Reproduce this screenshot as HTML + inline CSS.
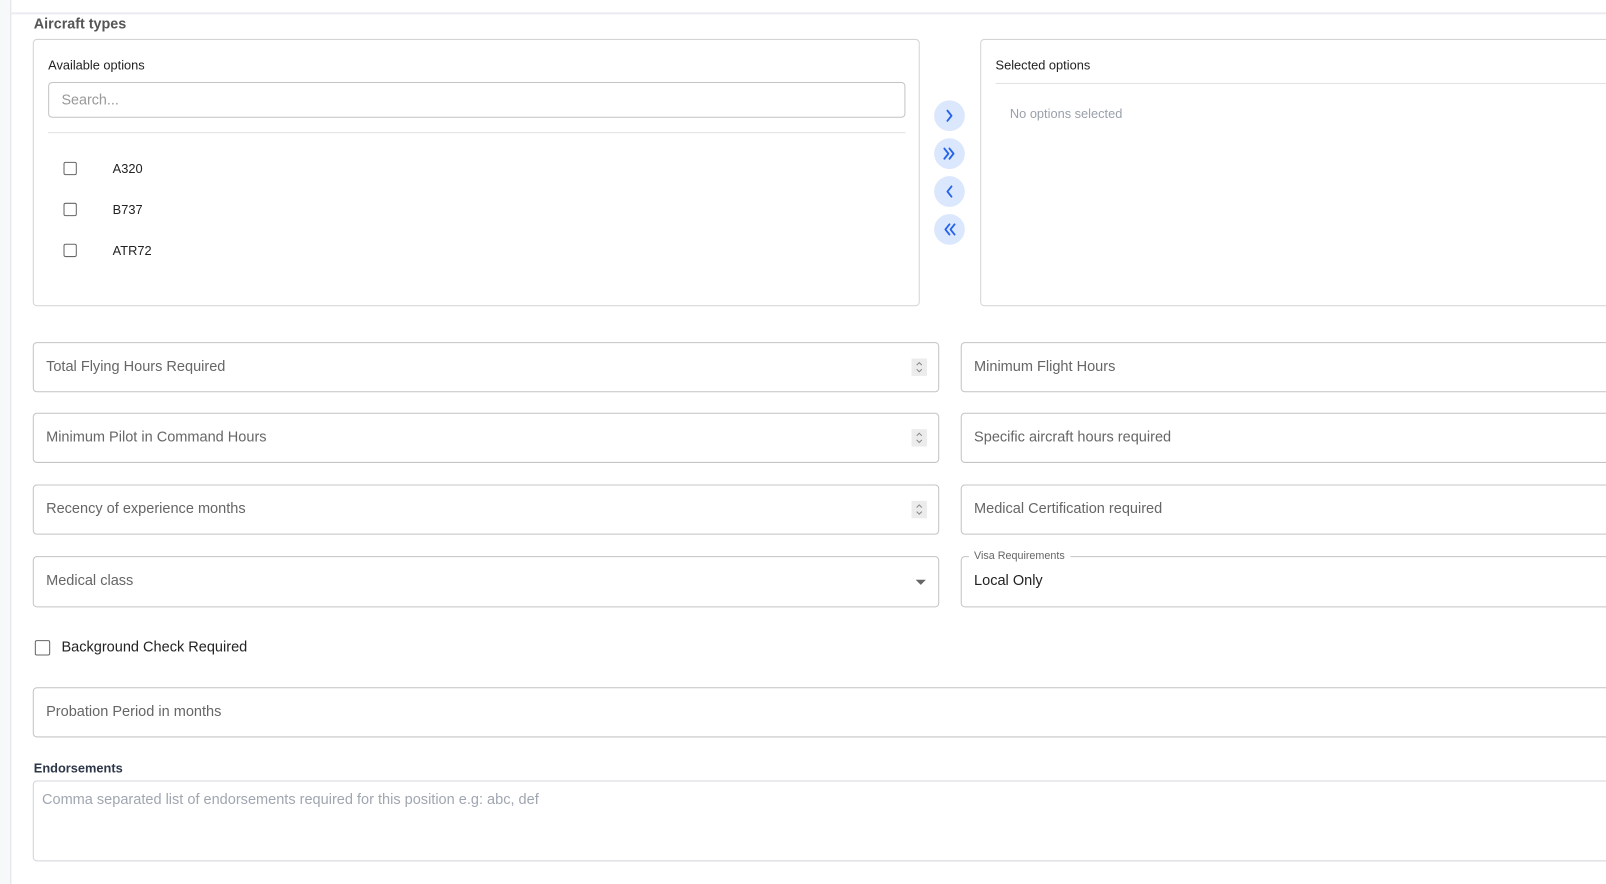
<!DOCTYPE html>
<html><head><meta charset="utf-8"><style>
*{box-sizing:border-box;margin:0;padding:0}
body{width:1606px;height:863px;overflow:hidden;background:#fff;font-family:"Liberation Sans",sans-serif;position:relative}
#w{position:absolute;left:0;top:0;width:1568px;height:843px;transform:scale(1.02423);transform-origin:0 0}
.a{position:absolute}
.side{left:0;top:0;width:11px;height:863px;background:#f7f8fa;border-right:1px solid #e2e3e6}
.top{left:11px;top:12px;width:1595px;height:2px;background:#ebebf2}
.box{position:absolute;border:1px solid #d4d4d4;border-radius:4px;background:#fff}
.inp{position:absolute;border:1px solid #c4c4c4;border-radius:4px;height:49px;font-size:14.2px;color:#666;padding-left:12px;line-height:47px}
.spin{position:absolute;right:11px;top:15px;width:15px;height:17px;background:#ececec}
.cb{position:absolute;width:13px;height:13px;border:1.5px solid #666;border-radius:2px}
</style></head><body><div id="w">
<div class="a side"></div><div class="a top"></div>
<div class="a" style="left:33px;top:15px;font-size:14px;font-weight:bold;color:#555">Aircraft types</div>
<div class="box" style="left:32px;top:38px;width:866px;height:261px">
 <div class="a" style="left:14px;top:18px;font-size:12.5px;color:#222">Available options</div>
 <div class="a" style="left:14px;top:41px;width:837px;height:35px;border:1px solid #c4c4c4;border-radius:4px;font-size:14px;color:#999;padding-left:12px;line-height:33px">Search...</div>
 <div class="a" style="left:14px;top:90px;width:837px;height:1px;background:#e2e2e2"></div>
 <div class="cb" style="left:29px;top:119px"></div><div class="a" style="left:77px;top:119px;font-size:12.5px;color:#222">A320</div>
 <div class="cb" style="left:29px;top:159px"></div><div class="a" style="left:77px;top:159px;font-size:12.5px;color:#222">B737</div>
 <div class="cb" style="left:29px;top:199px"></div><div class="a" style="left:77px;top:199px;font-size:12.5px;color:#222">ATR72</div>
</div>
<svg class="a" style="left:0;top:0" width="1606" height="300">
<g fill="#dbe7fd"><circle cx="927" cy="113" r="15"/><circle cx="927" cy="150" r="15"/><circle cx="927" cy="187" r="15"/><circle cx="927" cy="224" r="15"/></g>
<g fill="none" stroke="#2563eb" stroke-width="1.8" stroke-linecap="round" stroke-linejoin="round">
<path d="M925 108l4 5-4 5"/><path d="M922 145l4 5-4 5M927 145l4 5-4 5"/><path d="M929 182l-4 5 4 5"/><path d="M927 219l-4 5 4 5M932 219l-4 5 4 5"/></g></svg>
<div class="box" style="left:957px;top:38px;width:700px;height:261px">
 <div class="a" style="left:14px;top:18px;font-size:12.5px;color:#222">Selected options</div>
 <div class="a" style="left:14px;top:42px;width:700px;height:1px;background:#e2e2e2"></div>
 <div class="a" style="left:28px;top:65px;font-size:12.5px;color:#9aa0ab">No options selected</div>
</div>
<div class="inp" style="left:32px;top:334px;width:885px">Total Flying Hours Required<svg class="spin" viewBox="0 0 15 17"><path d="M5 6.5l2.5-2.5 2.5 2.5M5 10.5l2.5 2.5 2.5-2.5" fill="none" stroke="#888" stroke-width="1"/></svg></div>
<div class="inp" style="left:938px;top:334px;width:700px">Minimum Flight Hours</div>
<div class="inp" style="left:32px;top:403px;width:885px">Minimum Pilot in Command Hours<svg class="spin" viewBox="0 0 15 17"><path d="M5 6.5l2.5-2.5 2.5 2.5M5 10.5l2.5 2.5 2.5-2.5" fill="none" stroke="#888" stroke-width="1"/></svg></div>
<div class="inp" style="left:938px;top:403px;width:700px">Specific aircraft hours required</div>
<div class="inp" style="left:32px;top:473px;width:885px">Recency of experience months<svg class="spin" viewBox="0 0 15 17"><path d="M5 6.5l2.5-2.5 2.5 2.5M5 10.5l2.5 2.5 2.5-2.5" fill="none" stroke="#888" stroke-width="1"/></svg></div>
<div class="inp" style="left:938px;top:473px;width:700px">Medical Certification required</div>
<div class="inp" style="left:32px;top:543px;width:885px;height:50px">Medical class<div class="a" style="right:12px;top:22px;border-left:5px solid transparent;border-right:5px solid transparent;border-top:5px solid #666"></div></div>
<div class="inp" style="left:938px;top:543px;width:700px;height:50px;color:#222">Local Only</div>
<div class="a" style="left:946px;top:537px;background:#fff;padding:0 5px;font-size:10.5px;color:#666">Visa Requirements</div>
<div class="cb" style="left:34px;top:625px;width:15px;height:15px"></div>
<div class="a" style="left:60px;top:624px;font-size:14.2px;color:#222">Background Check Required</div>
<div class="inp" style="left:32px;top:671px;width:1600px">Probation Period in months</div>
<div class="a" style="left:33px;top:743px;font-size:12.5px;font-weight:bold;color:#2d3748">Endorsements</div>
<div class="a" style="left:32px;top:762px;width:1600px;height:79px;border:1px solid #d0d4da;border-radius:4px;font-size:14.2px;color:#a0a6b0;padding:10px 0 0 8px">Comma separated list of endorsements required for this position e.g: abc, def</div>
</div></body></html>
